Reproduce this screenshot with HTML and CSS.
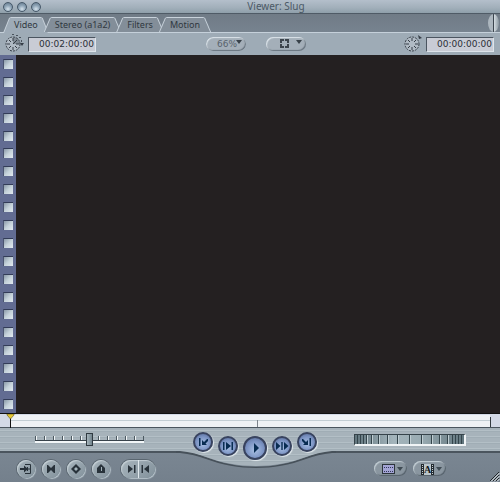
FILE: index.html
```html
<!DOCTYPE html>
<html lang="en">
<head>
  <meta charset="UTF-8">
  <meta name="viewport" content="width=device-width, initial-scale=1.0">
  <title>Viewer: Slug</title>
  <link rel="stylesheet" href="styles.css">
</head>
<body>

  <header class="titlebar">
    <div class="lights">
      <button class="light" aria-label="Close"></button>
      <button class="light" aria-label="Minimize"></button>
      <button class="light" aria-label="Zoom"></button>
    </div>
    <h1 class="title">Viewer: Slug</h1>
  </header>

  <!-- Tabs -->
  <nav class="tabs">
    <button class="tab active"><span>Video</span></button>
    <button class="tab"><span>Stereo (a1a2)</span></button>
    <button class="tab"><span>Filters</span></button>
    <button class="tab"><span>Motion</span></button>
    <div class="knob"></div>
  </nav>

  <!-- Timecodes and view popups -->
  <div class="toolbar">
    <div class="time-group">
      <svg class="clock" width="20" height="20" viewBox="0 0 20 20">
        <circle cx="9" cy="10" r="7" fill="#b0bac4"/>
        <path d="M9 10V3a7 7 0 0 1 7 7z" fill="#808a94"/>
        <circle cx="9" cy="10" r="7" fill="none" stroke="#353d46" stroke-dasharray="2 1"/>
        <path d="M9 4v3M9 13v3M3 10h3M12 10h3M5 6l2 2M11 12l2 2M5 14l2-2M9 10l4-4" stroke="#353d46" fill="none"/>
        <path d="M8 .5h2M12 1.500h2M15 3.500h2M17.500 6v2" stroke="#4a535d" fill="none"/>
        <path d="M16 9h4l-2 3z" fill="#353d46"/>
      </svg>
      <input class="timecode" type="text" value="00:02:00:00" aria-label="Duration">
    </div>
    <div class="view-group">
      <select class="pill zoom-select" aria-label="Zoom"><option>66%</option></select>
      <button class="pill" aria-label="View">
        <svg width="40" height="14" viewBox="0 0 40 14">
          <path d="M14 2h9v9h-9z" fill="#3c444c"/>
          <path d="M16 4h5v5h-5z" fill="#a4afb9"/>
          <path d="M18 2h1v2h-1zM18 9h1v2h-1zM14 6h2v1h-2zM21 6h2v1h-2z" fill="#a4afb9"/>
          <path d="M30 3h6l-3 4z" fill="#39424a"/>
        </svg>
      </button>
    </div>
    <div class="time-group end">
      <svg class="clock" width="20" height="20" viewBox="0 0 20 20">
        <circle cx="10" cy="10" r="7" fill="#b0bac4" stroke="#353d46" stroke-dasharray="2 1"/>
        <path d="M10 4v3M10 13v3M4 10h3M13 10h3M6 6l2 2M12 12l2 2M6 14l2-2M12 8l2-2" stroke="#353d46" fill="none"/>
        <path d="M16 1l4 3-3 1z" fill="#353d46"/>
      </svg>
      <input class="timecode" type="text" value="00:00:00:00" aria-label="Current time">
    </div>
  </div>

  <!-- Image area -->
  <main class="stage">
    <div class="film">
      <i></i><i></i><i></i><i></i><i></i><i></i><i></i><i></i><i></i><i></i>
      <i></i><i></i><i></i><i></i><i></i><i></i><i></i><i></i><i></i><i></i>
    </div>
    <div class="canvas"></div>
  </main>

  <!-- Scrubber -->
  <div class="scrubber">
    <div class="track"></div>
    <svg class="playhead" width="9" height="14" viewBox="0 0 9 14">
      <path d="M4 4h1v10h-1z" fill="#111"/>
      <path d="M1 0h7v1L4.500 5L1 1z" fill="#e4c634" stroke="#5d5220" stroke-width=".6"/>
    </svg>
    <div class="mark middle"></div>
    <div class="mark last"></div>
  </div>

  <!-- Transport -->
  <section class="transport">
    <svg class="bulge" width="160" height="42" viewBox="0 0 160 42">
      <defs>
        <pattern id="brushed" width="160" height="6" patternUnits="userSpaceOnUse">
          <rect width="160" height="6" fill="#a7b3bb"/>
          <path d="M0 2.500h160" stroke="#b3bfc6"/>
          <path d="M0 3.500h160" stroke="#a0adb5"/>
        </pattern>
      </defs>
      <path d="M0 22H4C14 23 22 26 30 29C62 42 98 42 130 29C138 26 146 23 156 22H160V25H156C146 26 138 28 130 31C98 43 62 43 30 31C22 28 14 26 4 25H0z" fill="#47515a"/>
      <path d="M0 0H160V23H156C146 24 138 26 130 29C98 41 62 41 30 29C22 26 14 24 4 23H0z" fill="url(#brushed)"/>
    </svg>
    <div class="side">
      <input class="shuttle" type="range" min="-6" max="6" value="0" aria-label="Shuttle">
    </div>
    <div class="play-buttons">
      <button class="round outer" aria-label="Previous edit">
        <svg width="14" height="14" viewBox="0 0 14 14"><path d="M3 3h1.500v8H3zM6 5v5h5L9.500 8.500L12 6l0-2h-1L8 7z" fill="#082c52"/></svg>
      </button>
      <button class="round" aria-label="Play in to out">
        <svg width="14" height="14" viewBox="0 0 14 14"><path d="M2 3h1.500v8H2zM5 3l5 4l-5 4zM10.500 3H12v8h-1.500z" fill="#082c52"/></svg>
      </button>
      <button class="round play" aria-label="Play">
        <svg width="14" height="14" viewBox="0 0 14 14"><path d="M6 2l5 5l-5 5z" fill="#082c52"/></svg>
      </button>
      <button class="round" aria-label="Play around current">
        <svg width="14" height="14" viewBox="0 0 14 14"><path d="M1 3l4.500 4L1 11zM6.300 3h1.400v8H6.300zM9 3l4.500 4L9 11z" fill="#082c52"/></svg>
      </button>
      <button class="round outer" aria-label="Next edit">
        <svg width="14" height="14" viewBox="0 0 14 14"><path d="M9.500 3H11v8H9.500zM8 5v5H3l1.500-1.500L2 6V4h1l3 3z" fill="#082c52"/></svg>
      </button>
    </div>
    <div class="side right">
      <div class="jog" role="slider" tabindex="0" aria-label="Jog" aria-valuenow="0">
        <svg width="109" height="9" viewBox="0 0 109 9">
          <path d="M2.500 0v9M5.500 0v9M8.500 0v9M11.500 0v9M16.500 0v9M23.500 0v9M32.500 0v9M42.500 0v9M54.500 0v9M66.500 0v9M76.500 0v9M84.500 0v9M92.500 0v9M97.500 0v9M100.500 0v9M103.500 0v9M106.500 0v9" stroke="#34454c"/>
          <path d="M12.500 0v9M17.500 0v9M24.500 0v9M33.500 0v9M43.500 0v9M55.500 0v9M67.500 0v9M77.500 0v9M85.500 0v9M93.500 0v9" stroke="#c0ced3"/>
        </svg>
      </div>
    </div>
  </section>

  <!-- Marking controls -->
  <footer class="controls">
    <button class="mark-btn" aria-label="Match frame">
      <svg width="12" height="12" viewBox="0 0 12 12"><path d="M5 1.500h5.500v9H5M7.500 4v4M7 6h3" fill="none" stroke="#28323a"/><path d="M0 5h4V2.500L8 6L4 9.500V7H0z" fill="#28323a"/></svg>
    </button>
    <button class="mark-btn" aria-label="Mark clip">
      <svg width="12" height="12" viewBox="0 0 12 12"><path d="M2 2h1l3 3l3-3h1v8H9L6 7l-3 3H2z" fill="#28323a"/></svg>
    </button>
    <button class="mark-btn" aria-label="Add keyframe">
      <svg width="12" height="12" viewBox="0 0 12 12"><path d="M6 1l5 5l-5 5l-5-5z" fill="#28323a"/><path d="M6 4l2 2l-2 2l-2-2z" fill="#a4b4bb"/></svg>
    </button>
    <button class="mark-btn" aria-label="Add marker">
      <svg width="12" height="12" viewBox="0 0 12 12"><path d="M6 1l4 4v5H2V5z" fill="#28323a"/><path d="M6.500 4v4" stroke="#a4b4bb"/></svg>
    </button>
    <div class="pair">
      <button aria-label="Mark in"><svg width="12" height="12" viewBox="0 0 12 12"><path d="M3 2l5 4l-5 4zM9 2h1.500v8H9z" fill="#28323a"/></svg></button>
      <button aria-label="Mark out"><svg width="12" height="12" viewBox="0 0 12 12"><path d="M9 2v8L4 6zM1.500 2H3v8H1.500z" fill="#28323a"/></svg></button>
    </div>
    <div class="menus">
      <button class="menu-btn" aria-label="Recent clips">
        <svg width="33" height="14" viewBox="0 0 33 14">
          <rect x="8.500" y="2.500" width="12" height="9" fill="#a3a4d4" stroke="#2c343b"/>
          <path d="M10 5.500h9M10 9.500h9" stroke="#31365a" stroke-dasharray="1 1"/>
          <path d="M23 5h6l-3 4z" fill="#3f4a53"/>
        </svg>
      </button>
      <button class="menu-btn" aria-label="Generators">
        <svg width="33" height="14" viewBox="0 0 33 14">
          <rect x="8" y="2" width="13" height="11" fill="#232a2f"/>
          <path d="M9.500 3v9M19.500 3v9" stroke="#c5cfd4" stroke-dasharray="1 1"/>
          <rect x="11" y="2" width="7" height="11" fill="#b9c4ca"/>
          <text x="14.500" y="11" text-anchor="middle" class="gen-letter">A</text>
          <path d="M23 5h6l-3 4z" fill="#3f4a53"/>
        </svg>
      </button>
    </div>
    <svg class="grip" width="10" height="10" viewBox="0 0 10 10">
      <path d="M0 9L9 0M3 9L9 3M6 9L9 6" stroke="#20262b"/>
      <path d="M1 9.500L9.500 1M4 9.500L9.500 4M7 9.500L9.500 7" stroke="#e8eef1"/>
    </svg>
  </footer>

</body>
</html>
```

FILE: styles.css
```css
/* Basic Styles */
* {
  box-sizing: border-box;
}

body {
  display: flex;
  flex-direction: column;
  min-height: 100vh;
  margin: 0;
  background-color: #76818d;
  font-family: "DejaVu Sans", sans-serif;
  font-size: 9px;
  color: #303840;
}

button,
input,
select {
  margin: 0;
  padding: 0;
  border: none;
  font: inherit;
  color: inherit;
}

svg {
  display: block;
  flex: none;
}

/* Title bar */
.titlebar {
  display: grid;
  grid-template-columns: 1fr auto 1fr;
  align-items: center;
  height: 14px;
  background: linear-gradient(#b4bfcb, #a1afba 60%, #8f9faa);
  border-bottom: 1px solid #4f5b66;
}

.lights {
  display: flex;
  gap: 4px;
  padding-left: 3px;
}

.light {
  width: 10px;
  height: 10px;
  border: 1px solid #47596a;
  border-radius: 50%;
  background: radial-gradient(circle at 50% 75%, #d5e2ec, #8da3b5 50%, #607589);
}

.title {
  grid-column: 2;
  align-self: start;
  margin: 0 0 0 52px;
  font-family: "Noto Sans", sans-serif;
  font-size: 10px;
  line-height: 12px;
  font-weight: normal;
  color: #4b5966;
}

/* Tabs */
.tabs {
  display: flex;
  align-items: flex-end;
  height: 19px;
  padding-left: 3px;
  background: linear-gradient(#707b86, #77838f);
  border-bottom: 1px solid #c5d0da;
}

.tab {
  height: 15px;
  margin-right: -5px;
  padding: 1px;
  padding-bottom: 0;
  background: #c8d2db;
  font-family: "Noto Sans", sans-serif;
  font-size: 9px;
  clip-path: polygon(0 100%, 6px 1px, 8px 0, calc(100% - 8px) 0, calc(100% - 6px) 1px, 100% 100%);
}

.tab span {
  display: block;
  height: 14px;
  padding: 0 10px;
  line-height: 14px;
  background: #838e99;
  clip-path: polygon(0 100%, 6px 0, calc(100% - 6px) 0, 100% 100%);
}

.tab.active {
  height: 16px;
  margin-bottom: -1px;
}

.tab.active span {
  height: 15px;
  background: #9eabb7;
}

.knob {
  width: 11px;
  height: 18px;
  margin-left: auto;
  margin-right: 1px;
  border-radius: 50%;
  background: linear-gradient(90deg, #acb6be 5px, #3c454e 5px, #3c454e 6px, #d5dde2 6px, #8a969f);
}

/* Toolbar */
.toolbar {
  display: grid;
  grid-template-columns: 1fr auto 1fr;
  align-items: center;
  height: 22px;
  padding: 0 6px 0 4px;
  background: #9eabb6;
}

.time-group {
  display: flex;
  align-items: center;
  gap: 4px;
}

.time-group.end {
  justify-content: flex-end;
}

.timecode {
  width: 68px;
  height: 15px;
  padding-right: 1px;
  text-align: right;
  background: #c9ccd5;
  border: 1px solid;
  border-color: #4b5560 #dde4ea #dde4ea #4b5560;
  color: #2b3037;
}

.view-group {
  display: flex;
  gap: 20px;
  padding-left: 14px;
}

.pill {
  width: 40px;
  height: 14px;
  border-radius: 7px;
  background-color: #a4afb9;
  box-shadow: inset 1px 1px 1px #dce4ea, inset -1px -1px 1px #68747f;
}

.zoom-select {
  appearance: none;
  padding-left: 11px;
  font-size: 9px;
  line-height: 13px;
  color: #59636d;
  background-image: url("data:image/svg+xml,%3Csvg xmlns='http://www.w3.org/2000/svg' width='6' height='4'%3E%3Cpath d='M0 0h6L3 4z' fill='%2339424a'/%3E%3C/svg%3E");
  background-repeat: no-repeat;
  background-position: 30px 3px;
}

/* Image area */
.stage {
  display: flex;
  flex: 1;
  min-height: 358px;
}

.film {
  display: flex;
  flex-direction: column;
  align-items: center;
  justify-content: space-around;
  width: 16px;
  background: #626c92;
}

.film i {
  width: 10px;
  height: 10px;
  border-top: 1px solid #333c58;
  border-left: 1px solid #4a5470;
  background: linear-gradient(135deg, #8a99a8, #c5d2da 50%, #e2eaf0);
}

.canvas {
  flex: 1;
  background: #242021;
}

/* Scrubber */
.scrubber {
  position: relative;
  height: 15px;
  padding: 1px 10px 0;
  background: #d3d9e6;
  border-top: 1px solid #111;
  border-bottom: 1px solid #4b565f;
}

.track {
  height: 12px;
  background: linear-gradient(#eff2f5 5px, #c3ced4 5px, #c3ced4 6px, #eff2f5 6px);
}

.playhead {
  position: absolute;
  top: 0;
  left: 6px;
}

.mark {
  position: absolute;
  bottom: 0;
  width: 1px;
  background: #333a40;
}

.mark.middle {
  left: calc(50% + 7px);
  height: 7px;
  background: #7d858c;
}

.mark.last {
  right: 9px;
  height: 10px;
}

/* Transport */
.transport {
  position: relative;
  z-index: 1;
  display: grid;
  grid-template-columns: 1fr auto 1fr;
  height: 25px;
  background: repeating-linear-gradient(#a7b3bb 0 2px, #b3bfc6 2px 3px, #a0adb5 3px 4px, #a7b3bb 4px 6px);
  border-bottom: 2px solid #4b555e;
}

.bulge {
  position: absolute;
  top: 0;
  left: calc(50% - 74px);
}

.side {
  padding: 5px 0 0 35px;
}

.side.right {
  display: flex;
  justify-content: flex-end;
  padding: 6px 34px 0 0;
}

.shuttle {
  display: block;
  appearance: none;
  width: 109px;
  height: 13px;
  background:
    linear-gradient(#38434b, #38434b) 0 7px / 100% 1px no-repeat,
    linear-gradient(#f2f6f8, #f2f6f8) 0 8px / 100% 2px no-repeat,
    repeating-linear-gradient(90deg, #4c5961 0 1px, #f2f6f8 1px 2px, transparent 2px 9px) 0 3px / 100% 5px no-repeat;
}

.shuttle::-webkit-slider-thumb {
  appearance: none;
  width: 7px;
  height: 13px;
  border: 1px solid #303a41;
  background: linear-gradient(90deg, #a6b5bc, #71838c);
}

.play-buttons {
  position: relative;
  display: flex;
  align-items: flex-start;
  gap: 5px;
  padding-left: 10px;
}

.round {
  display: flex;
  flex: none;
  align-items: center;
  justify-content: center;
  width: 20px;
  height: 20px;
  margin-top: 8px;
  border: 2px solid #38435f;
  border-radius: 50%;
  background: radial-gradient(circle at 50% 60%, #a9c0e4, #7b93c3 55%, #4f638f);
  box-shadow: 1px 1px 1px #e3eaee;
}

.round.outer {
  margin-top: 4px;
}

.round.play {
  width: 24px;
  height: 24px;
}

.jog {
  width: 112px;
  height: 12px;
  border: 1px solid;
  border-width: 1px 2px 2px 1px;
  border-color: #36434a #f0f4f6 #f0f4f6 #36434a;
  background: linear-gradient(90deg, #62767e, #a3b4bb 35%, #9aacb3 60%, #62767e);
}

/* Marking controls */
.controls {
  position: relative;
  display: flex;
  align-items: center;
  gap: 7px;
  height: 29px;
  padding: 2px 54px 0 17px;
  background: linear-gradient(#7a8692, #74808c);
}

.mark-btn,
.pair,
.menu-btn {
  background: linear-gradient(135deg, #a8b5bd, #82919b);
  box-shadow: inset 1px 1px 1px #c3ced4, 1px 1px 1px #b8c5cd, 0 0 0 1px #5a6670;
}

.mark-btn {
  display: flex;
  align-items: center;
  justify-content: center;
  width: 18px;
  height: 18px;
  border-radius: 50%;
}

.pair {
  display: flex;
  height: 18px;
  margin-left: 4px;
  border-radius: 9px;
}

.pair button {
  width: 17px;
  padding-left: 4px;
  background: none;
}

.pair button + button {
  padding-left: 1px;
  border-left: 1px solid #e0e8ec;
}

.menus {
  display: flex;
  gap: 6px;
  margin-left: auto;
}

.menu-btn {
  width: 33px;
  height: 15px;
  border-radius: 8px;
  background: #8a96a0;
  box-shadow: inset 1px 1px 1px #c3ced4, inset -1px -1px 1px #55616b;
}

.gen-letter {
  font-family: "Liberation Serif", serif;
  font-size: 10px;
  font-weight: bold;
  fill: #151a1e;
}

.grip {
  position: absolute;
  right: 0;
  bottom: 0;
}
```
